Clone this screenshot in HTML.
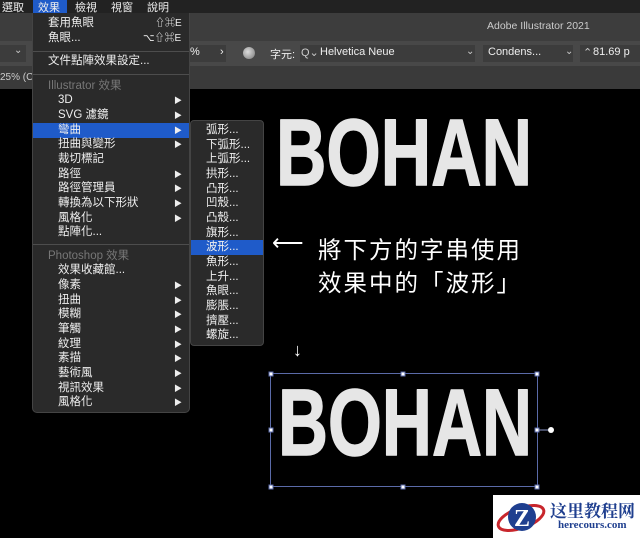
<!DOCTYPE html>
<html><head><meta charset="utf-8"><style>
*{margin:0;padding:0;box-sizing:border-box}
body{width:640px;height:538px;overflow:hidden;background:#000;position:relative;font-family:"Liberation Sans","Noto Sans CJK TC",sans-serif;color:#e8e8e8}
.a{position:absolute;white-space:nowrap}
#mb{left:0;top:0;width:640px;height:13px;background:#222}
#tb{left:0;top:13px;width:640px;height:28px;background:#3d3d3d}
#tool{left:0;top:41px;width:640px;height:25px;background:#484848}
#tab{left:0;top:66px;width:640px;height:23px;background:#3a3a3a}
.f{position:absolute;background:#3c3c3c;height:17px;top:45px}
.s{font-size:11px;color:#eee}
#menu{left:32px;top:13px;width:158px;height:400px;background:#2a2a2a;border:1px solid #444;border-top:none;border-radius:0 0 5px 5px}
.it{position:absolute;left:0;width:156px;height:15px;font-size:11.5px;line-height:15px;color:#eee}
.it span{position:absolute}
.hd{color:#777}
.ar{position:absolute;left:141px;font-size:8px;color:#eee}
.sep{position:absolute;left:0;width:156px;height:1px;background:#4d4d4d}
.hl{background:#1f5bc9}
#sub{left:190px;top:120px;width:74px;height:226px;background:#2a2a2a;border:1px solid #444;border-radius:4px}
.si{position:absolute;left:0;width:72px;height:15px;font-size:11.5px;line-height:15px;padding-left:15px;color:#eee}
</style></head><body>
<div class="a" id="mb"></div>
<div class="a s" style="left:2px;top:-1px;font-size:11px">選取</div>
<div class="a hl" style="left:33px;top:0;width:34px;height:13px"></div>
<div class="a s" style="left:38px;top:-1px">效果</div>
<div class="a s" style="left:75px;top:-1px">檢視</div>
<div class="a s" style="left:111px;top:-1px">視窗</div>
<div class="a s" style="left:147px;top:-1px">說明</div>
<div class="a" id="tb"></div>
<div class="a" style="left:487px;top:20px;font-size:10.5px;color:#ccc">Adobe Illustrator 2021</div>
<div class="a" id="tool"></div>
<div class="f" style="left:0;width:26px"></div>
<div class="a" style="left:14px;top:45px;font-size:10px;color:#ccc">⌄</div>
<div class="f" style="left:190px;width:36px"></div>
<div class="a s" style="left:190px;top:46px">%</div>
<div class="a s" style="left:220px;top:46px">›</div>
<div class="a" style="left:243px;top:47px;width:12px;height:12px;border-radius:50%;background:radial-gradient(circle at 40% 40%,#ddd,#777)"></div>
<div class="a s" style="left:270px;top:46px">字元:</div>
<div class="f" style="left:300px;width:175px"></div>
<div class="a s" style="left:301px;top:46px;color:#ccc">Q⌄</div>
<div class="a s" style="left:320px;top:46px">Helvetica Neue</div>
<div class="a" style="left:466px;top:46px;font-size:10px;color:#ccc">⌄</div>
<div class="f" style="left:483px;width:90px"></div>
<div class="a s" style="left:488px;top:46px">Condens...</div>
<div class="a" style="left:565px;top:46px;font-size:10px;color:#ccc">⌄</div>
<div class="f" style="left:580px;width:60px"></div>
<div class="a s" style="left:583px;top:46px;color:#ccc">⌃</div>
<div class="a s" style="left:593px;top:46px">81.69 p</div>
<div class="a" id="tab"></div>
<div class="a s" style="left:0;top:72px;font-size:10px;color:#ccc">25% (CN</div>
<div class="a" style="left:0;top:89px;width:640px;height:449px;background:#000"></div>

<svg class="a" style="left:0;top:0" width="640" height="538">
<text x="276" y="185" style="font-family:'Liberation Sans';font-weight:700" font-size="95" fill="#e6e6e6" stroke="#e6e6e6" stroke-width="1.5" stroke-linejoin="round" textLength="256" lengthAdjust="spacingAndGlyphs">BOHAN</text>
<text x="278" y="455" style="font-family:'Liberation Sans';font-weight:700" font-size="95" fill="#e6e6e6" stroke="#e6e6e6" stroke-width="1.5" stroke-linejoin="round" textLength="254" lengthAdjust="spacingAndGlyphs">BOHAN</text>
<rect x="270.5" y="373.5" width="267" height="113" fill="none" stroke="#5a6aa8" stroke-width="1"/>
<g fill="#fff" stroke="#5a6aa8"><rect x="269" y="372" width="4" height="4"/><rect x="401" y="372" width="4" height="4"/><rect x="535" y="372" width="4" height="4"/><rect x="269" y="428" width="4" height="4"/><rect x="535" y="428" width="4" height="4"/><rect x="269" y="485" width="4" height="4"/><rect x="401" y="485" width="4" height="4"/><rect x="535" y="485" width="4" height="4"/></g>
<line x1="539" y1="430" x2="549" y2="430" stroke="#8a96c8"/><circle cx="551" cy="430" r="3" fill="#fff"/>
</svg>
<div class="a" style="left:272px;top:230px;font-size:22px;color:#fff">⟵</div>
<div class="a" style="left:318px;top:231px;font-size:23.5px;color:#fff;letter-spacing:2px">將下方的字串使用</div>
<div class="a" style="left:318px;top:264px;font-size:23.5px;color:#fff;letter-spacing:2px">效果中的「波形」</div>
<div class="a" style="left:293px;top:340px;font-size:18px;color:#fff">↓</div>

<div class="a" id="menu">
<div class="it" style="top:3px"><span style="left:15px">套用魚眼</span><span style="left:122px;font-size:10px">⇧⌘E</span></div>
<div class="it" style="top:18px"><span style="left:15px">魚眼...</span><span style="left:110px;font-size:10px">⌥⇧⌘E</span></div>
<div class="sep" style="top:38px"></div>
<div class="it" style="top:41px"><span style="left:15px">文件點陣效果設定...</span></div>
<div class="sep" style="top:61px"></div>
<div class="it hd" style="top:66px"><span style="left:15px">Illustrator 效果</span></div>
<div class="it" style="top:80px"><span style="left:25px">3D</span><span class="ar">▶</span></div>
<div class="it" style="top:95px"><span style="left:25px">SVG 濾鏡</span><span class="ar">▶</span></div>
<div class="it hl" style="top:110px"><span style="left:25px">彎曲</span><span class="ar">▶</span></div>
<div class="it" style="top:124px"><span style="left:25px">扭曲與變形</span><span class="ar">▶</span></div>
<div class="it" style="top:139px"><span style="left:25px">裁切標記</span></div>
<div class="it" style="top:154px"><span style="left:25px">路徑</span><span class="ar">▶</span></div>
<div class="it" style="top:168px"><span style="left:25px">路徑管理員</span><span class="ar">▶</span></div>
<div class="it" style="top:183px"><span style="left:25px">轉換為以下形狀</span><span class="ar">▶</span></div>
<div class="it" style="top:198px"><span style="left:25px">風格化</span><span class="ar">▶</span></div>
<div class="it" style="top:212px"><span style="left:25px">點陣化...</span></div>
<div class="sep" style="top:231px"></div>
<div class="it hd" style="top:236px"><span style="left:15px">Photoshop 效果</span></div>
<div class="it" style="top:250px"><span style="left:25px">效果收藏館...</span></div>
<div class="it" style="top:265px"><span style="left:25px">像素</span><span class="ar">▶</span></div>
<div class="it" style="top:280px"><span style="left:25px">扭曲</span><span class="ar">▶</span></div>
<div class="it" style="top:294px"><span style="left:25px">模糊</span><span class="ar">▶</span></div>
<div class="it" style="top:309px"><span style="left:25px">筆觸</span><span class="ar">▶</span></div>
<div class="it" style="top:324px"><span style="left:25px">紋理</span><span class="ar">▶</span></div>
<div class="it" style="top:338px"><span style="left:25px">素描</span><span class="ar">▶</span></div>
<div class="it" style="top:353px"><span style="left:25px">藝術風</span><span class="ar">▶</span></div>
<div class="it" style="top:368px"><span style="left:25px">視訊效果</span><span class="ar">▶</span></div>
<div class="it" style="top:382px"><span style="left:25px">風格化</span><span class="ar">▶</span></div>
</div>

<div class="a" id="sub">
<div class="si" style="top:2px">弧形...</div>
<div class="si" style="top:17px">下弧形...</div>
<div class="si" style="top:31px">上弧形...</div>
<div class="si" style="top:46px">拱形...</div>
<div class="si" style="top:61px">凸形...</div>
<div class="si" style="top:75px">凹殼...</div>
<div class="si" style="top:90px">凸殼...</div>
<div class="si" style="top:105px">旗形...</div>
<div class="si hl" style="top:119px">波形...</div>
<div class="si" style="top:134px">魚形...</div>
<div class="si" style="top:149px">上升...</div>
<div class="si" style="top:163px">魚眼...</div>
<div class="si" style="top:178px">膨脹...</div>
<div class="si" style="top:193px">擠壓...</div>
<div class="si" style="top:207px">螺旋...</div>
</div>

<div class="a" style="left:493px;top:495px;width:147px;height:43px;background:#fff"></div>
<svg class="a" style="left:495px;top:497px" width="52" height="40">
<ellipse cx="26" cy="21" rx="24" ry="10" fill="none" stroke="#c8262c" stroke-width="3" transform="rotate(-20 26 21)"/>
<circle cx="27" cy="20" r="14" fill="#1f3f8f"/>
<text x="19" y="29" font-family="Liberation Serif" font-weight="bold" font-size="24" fill="#fff">Z</text>
</svg>
<div class="a" style="left:550px;top:497px;font-size:17px;font-weight:bold;color:#1f3f8f;font-family:'Liberation Serif','Noto Serif CJK SC',serif">这里教程网</div>
<div class="a" style="left:558px;top:519px;font-size:11px;font-weight:bold;color:#1f3f8f;font-family:'Liberation Serif',serif">herecours.com</div>
</body></html>
